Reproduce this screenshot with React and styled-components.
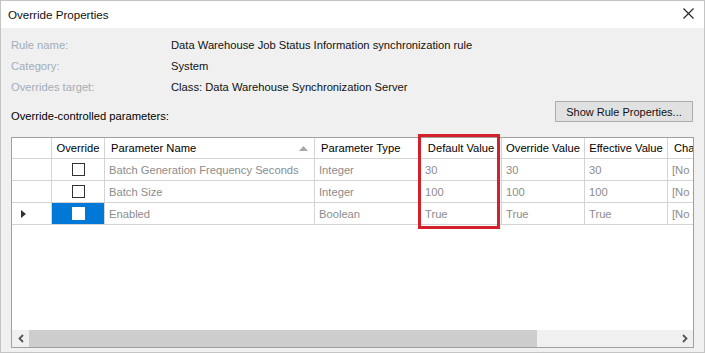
import styled, {createGlobalStyle} from 'styled-components';

const GlobalStyle = createGlobalStyle`
  html, body {
    margin: 0;
    padding: 0;
    background: #ffffff;
  }
  body {
    font-family: 'Liberation Sans', Arial, sans-serif;
    font-size: 11.2px;
    color: #000000;
  }
`;

// row header, override, name, type, default, override value, effective, change
const columns = '40px 53px 210px 106px 81px 83px 83px 100px';

const info = [
    {label: 'Rule name:', value: 'Data Warehouse Job Status Information synchronization rule'},
    {label: 'Category:', value: 'System'},
    {label: 'Overrides target:', value: 'Class: Data Warehouse Synchronization Server'},
];

const headers = [
    {text: ''},
    {text: 'Override', center: true},
    {text: 'Parameter Name', sorted: true},
    {text: 'Parameter Type'},
    {text: 'Default Value', center: true},
    {text: 'Override Value', center: true},
    {text: 'Effective Value', center: true},
    {text: 'Change'},
];

const rows = [
    {name: 'Batch Generation Frequency Seconds', type: 'Integer', def: '30', over: '30', eff: '30'},
    {name: 'Batch Size', type: 'Integer', def: '100', over: '100', eff: '100'},
    {name: 'Enabled', type: 'Boolean', def: 'True', over: 'True', eff: 'True', current: true},
];

const App = () => {
    return (
        <>
            <GlobalStyle/>
            <Window>
                <TitleBar>
                    <Title>Override Properties</Title>
                    <CloseIcon width="11" height="11" viewBox="0 0 11 11">
                        <path d="M0.5 0.5 L10.5 10.5 M10.5 0.5 L0.5 10.5" stroke="#222" strokeWidth="1.1"/>
                    </CloseIcon>
                </TitleBar>
                <Body>
                    {info.map((item) => (
                        <InfoRow key={item.label}>
                            <InfoLabel>{item.label}</InfoLabel>
                            <InfoValue>{item.value}</InfoValue>
                        </InfoRow>
                    ))}
                    <ParamsBar>
                        <ParamsLabel>Override-controlled parameters:</ParamsLabel>
                        <Button>Show Rule Properties...</Button>
                    </ParamsBar>
                    <Grid>
                        <GridRows>
                            <HeaderRow>
                                {headers.map((h, i) => (
                                    <HeaderCell key={i} $center={h.center}>
                                        {h.text}
                                        {h.sorted && (
                                            <SortIcon width="9" height="5" viewBox="0 0 9 5">
                                                <path d="M0 5 L4.5 0 L9 5 Z" fill="#a8a8a8"/>
                                            </SortIcon>
                                        )}
                                    </HeaderCell>
                                ))}
                            </HeaderRow>
                            {rows.map((r) => (
                                <DataRow key={r.name}>
                                    <RowHeader>
                                        {r.current && (
                                            <svg width="5" height="8" viewBox="0 0 5 8">
                                                <path d="M0 0 L5 4 L0 8 Z" fill="#333"/>
                                            </svg>
                                        )}
                                    </RowHeader>
                                    <CheckCell $selected={r.current}>
                                        <CheckBox $selected={r.current}/>
                                    </CheckCell>
                                    <Cell>{r.name}</Cell>
                                    <Cell>{r.type}</Cell>
                                    <Cell>{r.def}</Cell>
                                    <Cell>{r.over}</Cell>
                                    <Cell>{r.eff}</Cell>
                                    <Cell>[No change]</Cell>
                                </DataRow>
                            ))}
                        </GridRows>
                        <ScrollBar>
                            <ScrollArrow>
                                <svg width="6" height="9" viewBox="0 0 6 9">
                                    <path d="M5 1 L1.5 4.5 L5 8" stroke="#555" strokeWidth="1.8" fill="none"/>
                                </svg>
                            </ScrollArrow>
                            <Track>
                                <Thumb/>
                            </Track>
                            <ScrollArrow>
                                <svg width="6" height="9" viewBox="0 0 6 9">
                                    <path d="M1 1 L4.5 4.5 L1 8" stroke="#555" strokeWidth="1.8" fill="none"/>
                                </svg>
                            </ScrollArrow>
                        </ScrollBar>
                        <Highlight/>
                    </Grid>
                </Body>
            </Window>
        </>
    );
};

const Window = styled.div`
  width: 705px;
  height: 353px;
  box-sizing: border-box;
  border: 1px solid #c4c4c4;
  display: flex;
  flex-direction: column;
  background: #f0f0f0;
  overflow: hidden;
`;

const TitleBar = styled.div`
  height: 27px;
  flex-shrink: 0;
  background: #ffffff;
  display: flex;
  align-items: center;
  justify-content: space-between;
  padding: 0 10px 0 7px;
`;

const Title = styled.span`
  font-size: 11.6px;
  color: #111111;
  margin-top: -1px;
`;

const CloseIcon = styled.svg`
  display: block;
  margin-top: -2px;
`;

const Body = styled.div`
  flex: 1;
  display: flex;
  flex-direction: column;
  padding: 6px 10px 4px 10px;
  min-height: 0;
`;

const InfoRow = styled.div`
  display: grid;
  grid-template-columns: 160px 1fr;
  height: 21px;
  align-items: center;
`;

const InfoLabel = styled.span`
  color: #a3adb8;
`;

const InfoValue = styled.span`
  color: #111111;
`;

const ParamsBar = styled.div`
  display: flex;
  justify-content: space-between;
  align-items: flex-start;
  height: 28px;
  margin-bottom: 12px;
`;

const ParamsLabel = styled.span`
  padding-top: 11px;
  line-height: 16px;
`;

const Button = styled.button`
  margin-top: 4px;
  margin-right: 1px;
  width: 138px;
  height: 21px;
  padding: 0;
  border: 1px solid #adadad;
  background: #e1e1e1;
  font-family: 'Liberation Sans', Arial, sans-serif;
  font-size: 11px;
  color: #111111;
`;

const Grid = styled.div`
  position: relative;
  flex: 1;
  display: flex;
  flex-direction: column;
  justify-content: space-between;
  border: 1px solid #a0a0a0;
  background: #ffffff;
  min-height: 0;
`;

const GridRows = styled.div`
  overflow: hidden;
`;

const RowBase = styled.div`
  display: grid;
  grid-template-columns: ${columns};
  width: max-content;
`;

const HeaderRow = styled(RowBase)`
  height: 21px;
`;

const DataRow = styled(RowBase)`
  height: 22px;
`;

const HeaderCell = styled.div`
  position: relative;
  display: flex;
  align-items: center;
  justify-content: ${(p) => (p.$center ? 'center' : 'flex-start')};
  padding: 0 ${(p) => (p.$center ? '0' : '6px')};
  border-right: 1px solid #d4d4d4;
  border-bottom: 1px solid #d4d4d4;
  white-space: nowrap;
  overflow: hidden;
  color: #000000;
`;

const SortIcon = styled.svg`
  position: absolute;
  right: 6px;
  top: 8px;
`;

const Cell = styled.div`
  display: flex;
  align-items: center;
  padding: 0 4px;
  border-right: 1px solid #d4d4d4;
  border-bottom: 1px solid #d4d4d4;
  white-space: nowrap;
  overflow: hidden;
  color: #8c8c8c;
`;

const RowHeader = styled(Cell)`
  padding: 0 0 0 9px;
`;

const CheckCell = styled(Cell)`
  justify-content: center;
  padding: 0;
  background: ${(p) => (p.$selected ? '#0078d7' : '#ffffff')};
`;

const CheckBox = styled.div`
  width: 13px;
  height: 13px;
  box-sizing: border-box;
  border: 1px solid ${(p) => (p.$selected ? '#ffffff' : '#333333')};
  background: #ffffff;
`;

const ScrollBar = styled.div`
  height: 17px;
  display: flex;
  background: #f0f0f0;
`;

const ScrollArrow = styled.div`
  width: 17px;
  display: flex;
  align-items: center;
  justify-content: center;
`;

const Track = styled.div`
  flex: 1;
  display: flex;
  align-items: stretch;
`;

const Thumb = styled.div`
  width: 508px;
  background: #cdcdcd;
`;

const Highlight = styled.div`
  position: absolute;
  left: 406px;
  top: -4px;
  width: 82px;
  height: 95px;
  box-sizing: border-box;
  border: 3px solid #d4202b;
  pointer-events: none;
`;

export default App;
